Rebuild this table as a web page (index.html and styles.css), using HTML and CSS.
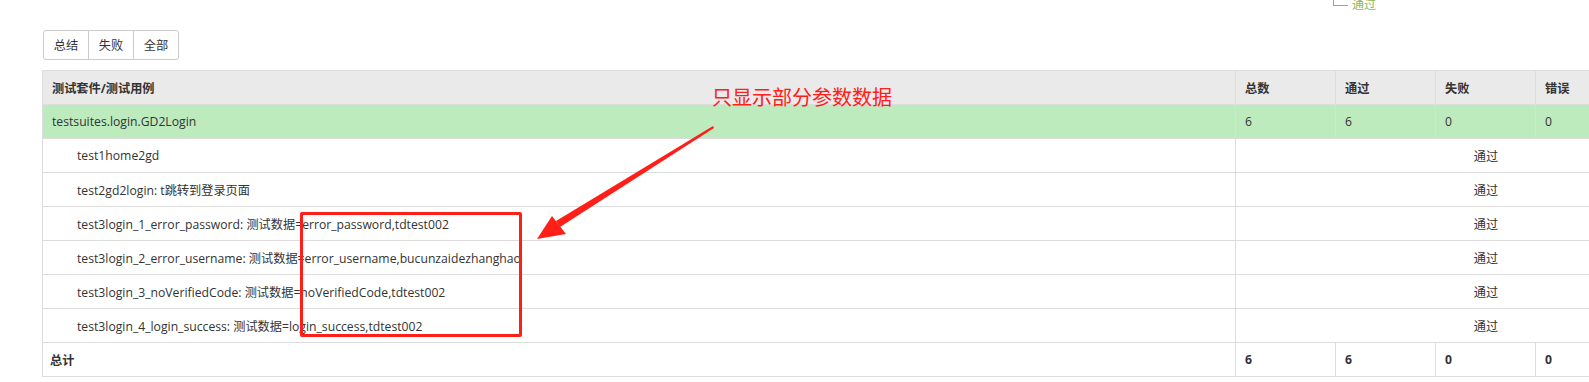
FILE: index.html
```html
<!DOCTYPE html>
<html lang="zh">
<head>
<meta charset="utf-8">
<link rel="stylesheet" href="styles.css">
</head>
<body>
<div class="legend-cut"><span class="legend-line"></span><span class="legend-text">通过</span></div>
<div class="page">
  <div class="btn-group">
    <button class="btn">总结</button><button class="btn">失败</button><button class="btn">全部</button>
  </div>
  <table class="result">
    <colgroup>
      <col class="c-name"><col class="c-num"><col class="c-num"><col class="c-num"><col class="c-num"><col class="c-num">
    </colgroup>
    <thead>
      <tr class="head"><td>测试套件/测试用例</td><td>总数</td><td>通过</td><td>失败</td><td>错误</td><td>查看</td></tr>
    </thead>
    <tbody>
      <tr class="suite"><td>testsuites.login.GD2Login</td><td>6</td><td>6</td><td>0</td><td>0</td><td>详细</td></tr>
      <tr class="case"><td class="case-name">test1home2gd</td><td colspan="5" class="status">通过</td></tr>
      <tr class="case"><td class="case-name">test2gd2login: t跳转到登录页面</td><td colspan="5" class="status">通过</td></tr>
      <tr class="case"><td class="case-name">test3login_1_error_password: 测试数据=error_password,tdtest002</td><td colspan="5" class="status">通过</td></tr>
      <tr class="case"><td class="case-name">test3login_2_error_username: 测试数据=error_username,bucunzaidezhanghao</td><td colspan="5" class="status">通过</td></tr>
      <tr class="case"><td class="case-name">test3login_3_noVerifiedCode: 测试数据=noVerifiedCode,tdtest002</td><td colspan="5" class="status">通过</td></tr>
      <tr class="case"><td class="case-name">test3login_4_login_success: 测试数据=login_success,tdtest002</td><td colspan="5" class="status">通过</td></tr>
      <tr class="total"><td>总计</td><td>6</td><td>6</td><td>0</td><td>0</td><td></td></tr>
    </tbody>
  </table>
</div>
<div class="note">只显示部分参数数据</div>
<div class="mark-box"></div>
<svg class="arrow" width="1589" height="382" viewBox="0 0 1589 382">
  <polygon points="713,126 714,128 560,227 556,221" fill="#fe2018"/>
  <polygon points="537,239 552,216 566,234" fill="#fe2018"/>
</svg>
</body>
</html>
```
FILE: styles.css
```css
html, body {
  margin: 0;
  padding: 0;
  overflow: hidden;
  background: #fff;
}
body {
  width: 1589px;
  height: 382px;
  position: relative;
  font-family: "Open Sans", "Noto Sans CJK SC", sans-serif;
  font-size: 12.2px;
  color: #333;
}
.page {
  padding: 30px 0 0 42px;
}
.btn-group {
  display: flex;
  margin-bottom: 10px;
}
.btn {
  font-family: inherit;
  font-size: 12.2px;
  color: #333;
  background: #fff;
  border: 1px solid #ccc;
  height: 30px;
  width: 46px;
  padding: 0;
  margin: 0 0 0 -1px;
}
.btn:first-child {
  margin-left: 1px;
  border-radius: 3px 0 0 3px;
}
.btn:last-child {
  border-radius: 0 3px 3px 0;
}
.result {
  border-collapse: collapse;
  table-layout: fixed;
  width: 1694px;
}
.c-name { width: 1193px; }
.c-num { width: 100px; }
.result td {
  border: 1px solid #ddd;
  height: 34px;
  padding: 0 8px 0 9px;
  box-sizing: border-box;
  white-space: nowrap;
  vertical-align: middle;
}
.head td {
  background: #eaeaea;
  font-weight: bold;
}
.suite td {
  background: #beebbe;
}
.case td.case-name {
  padding-left: 34px;
}
.status {
  text-align: center;
}
.total td {
  font-weight: bold;
  padding-left: 7px;
}
.total td + td {
  padding-left: 9px;
}
.legend-cut {
  position: absolute;
  left: 1333px;
  top: -5px;
  display: flex;
  align-items: flex-end;
  color: #8ab85a;
  font-size: 12px;
}
.legend-line {
  width: 14px;
  height: 6px;
  border-left: 1px solid #8ab85a;
  border-bottom: 1px solid #8ab85a;
  margin: 0 4px 7px 0;
}
.note {
  position: absolute;
  left: 712px;
  top: 84px;
  font-size: 20px;
  color: #fe2018;
  font-family: "Noto Sans CJK SC", sans-serif;
  line-height: 26px;
}
.mark-box {
  position: absolute;
  left: 300px;
  top: 212px;
  width: 216px;
  height: 119px;
  border: 3px solid #fe2018;
  border-radius: 2px;
}
.arrow {
  position: absolute;
  left: 0;
  top: 0;
}
```
